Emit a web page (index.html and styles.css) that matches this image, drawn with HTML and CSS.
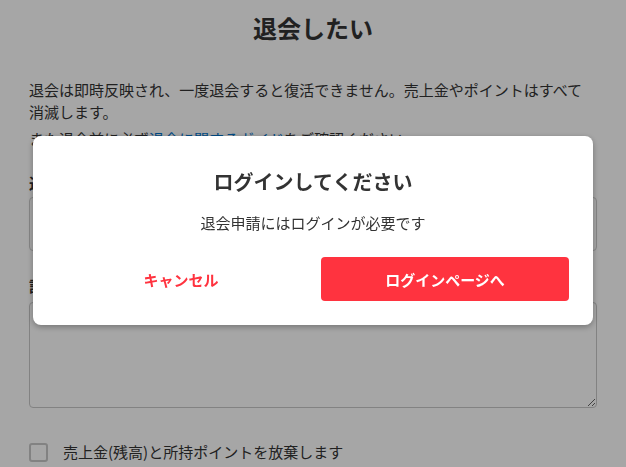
FILE: index.html
```html
<!DOCTYPE html>
<html lang="ja">
<head>
<meta charset="utf-8">
<title>退会したい</title>
<link rel="stylesheet" href="styles.css">
</head>
<body>
<main class="page">
  <h1 class="page-title">退会したい</h1>
  <p class="lead">退会は即時反映され、一度退会すると復活できません。売上金やポイントはすべて消滅します。</p>
  <p class="lead">また退会前に必ず<a class="link" href="#">退会に関するガイド</a>をご確認ください。</p>

  <div class="field field-first">
    <label class="field-label">退会理由</label>
    <div class="select"></div>
  </div>

  <div class="field field-second">
    <label class="field-label">詳しい理由</label>
    <textarea class="textarea"></textarea>
  </div>

  <div class="check-row">
    <span class="checkbox"></span>
    <span class="check-text">売上金(残高)と所持ポイントを放棄します</span>
  </div>
</main>

<div class="overlay">
  <div class="modal">
    <h2 class="modal-title">ログインしてください</h2>
    <p class="modal-text">退会申請にはログインが必要です</p>
    <div class="modal-actions">
      <button class="btn btn-cancel" type="button">キャンセル</button>
      <button class="btn btn-primary" type="button">ログインページへ</button>
    </div>
  </div>
</div>
</body>
</html>
```

FILE: styles.css
```css
* { box-sizing: border-box; }

html, body {
  margin: 0;
  padding: 0;
  background: #ffffff;
}

body {
  font-family: "Noto Sans CJK JP", "Noto Sans", sans-serif;
  color: #333333;
  font-size: 15px;
  width: 626px;
  height: 467px;
  overflow: hidden;
}

.page {
  padding: 0 29px;
}

.page-title {
  margin: 10px 0 0;
  font-size: 24px;
  line-height: 36px;
  font-weight: 700;
  text-align: center;
  color: #333333;
}

.lead {
  margin: 0 0 5px;
  font-size: 15px;
  line-height: 22px;
}

.page-title + .lead {
  margin-top: 33px;
}

.link {
  color: #0073cc;
  text-decoration: none;
}

.field-label {
  display: block;
  font-weight: 700;
  font-size: 15px;
  line-height: 24px;
}

.field-first {
  margin-top: 21px;
}

.field-first .field-label {
  margin-bottom: 2px;
}

.select {
  height: 54px;
  border: 1px solid #cccccc;
  border-radius: 4px;
  background: #ffffff;
}

.field-second {
  margin-top: 23px;
}

.field-second .field-label {
  margin-bottom: 4px;
}

.textarea {
  display: block;
  width: 100%;
  height: 106px;
  border: 1px solid #c8c8c8;
  border-radius: 4px;
  background: #ffffff;
  resize: vertical;
  font-family: inherit;
  margin: 0;
}

.check-row {
  margin-top: 32px;
  display: flex;
  align-items: center;
  gap: 15px;
  line-height: 24px;
}

.checkbox {
  width: 19px;
  height: 19px;
  border: 2px solid #c8c8c8;
  border-radius: 3px;
  background: #ffffff;
}

.check-text {
  font-size: 15px;
}

.overlay {
  position: fixed;
  inset: 0;
  background: rgba(0, 0, 0, 0.35);
  display: flex;
  justify-content: center;
  align-items: flex-start;
  padding-top: 136px;
}

.modal {
  width: 560px;
  background: #ffffff;
  border-radius: 8px;
  box-shadow: 0 2px 6px rgba(0, 0, 0, 0.3);
  padding: 32px 24px 24px;
  display: flex;
  flex-direction: column;
  align-items: stretch;
}

.modal-title {
  margin: 0;
  font-size: 20px;
  line-height: 28px;
  font-weight: 700;
  text-align: center;
  color: #333333;
}

.modal-text {
  margin: 15px 0 0;
  font-size: 15px;
  line-height: 24px;
  text-align: center;
  color: #333333;
}

.modal-actions {
  margin-top: 22px;
  display: grid;
  grid-template-columns: 1fr 1fr;
  gap: 16px;
}

.btn {
  height: 44px;
  border: none;
  border-radius: 4px;
  font-family: inherit;
  font-size: 15px;
  font-weight: 700;
  cursor: pointer;
}

.btn-cancel {
  background: #ffffff;
  color: #ff333f;
}

.btn-primary {
  background: #ff333f;
  color: #ffffff;
}
```
